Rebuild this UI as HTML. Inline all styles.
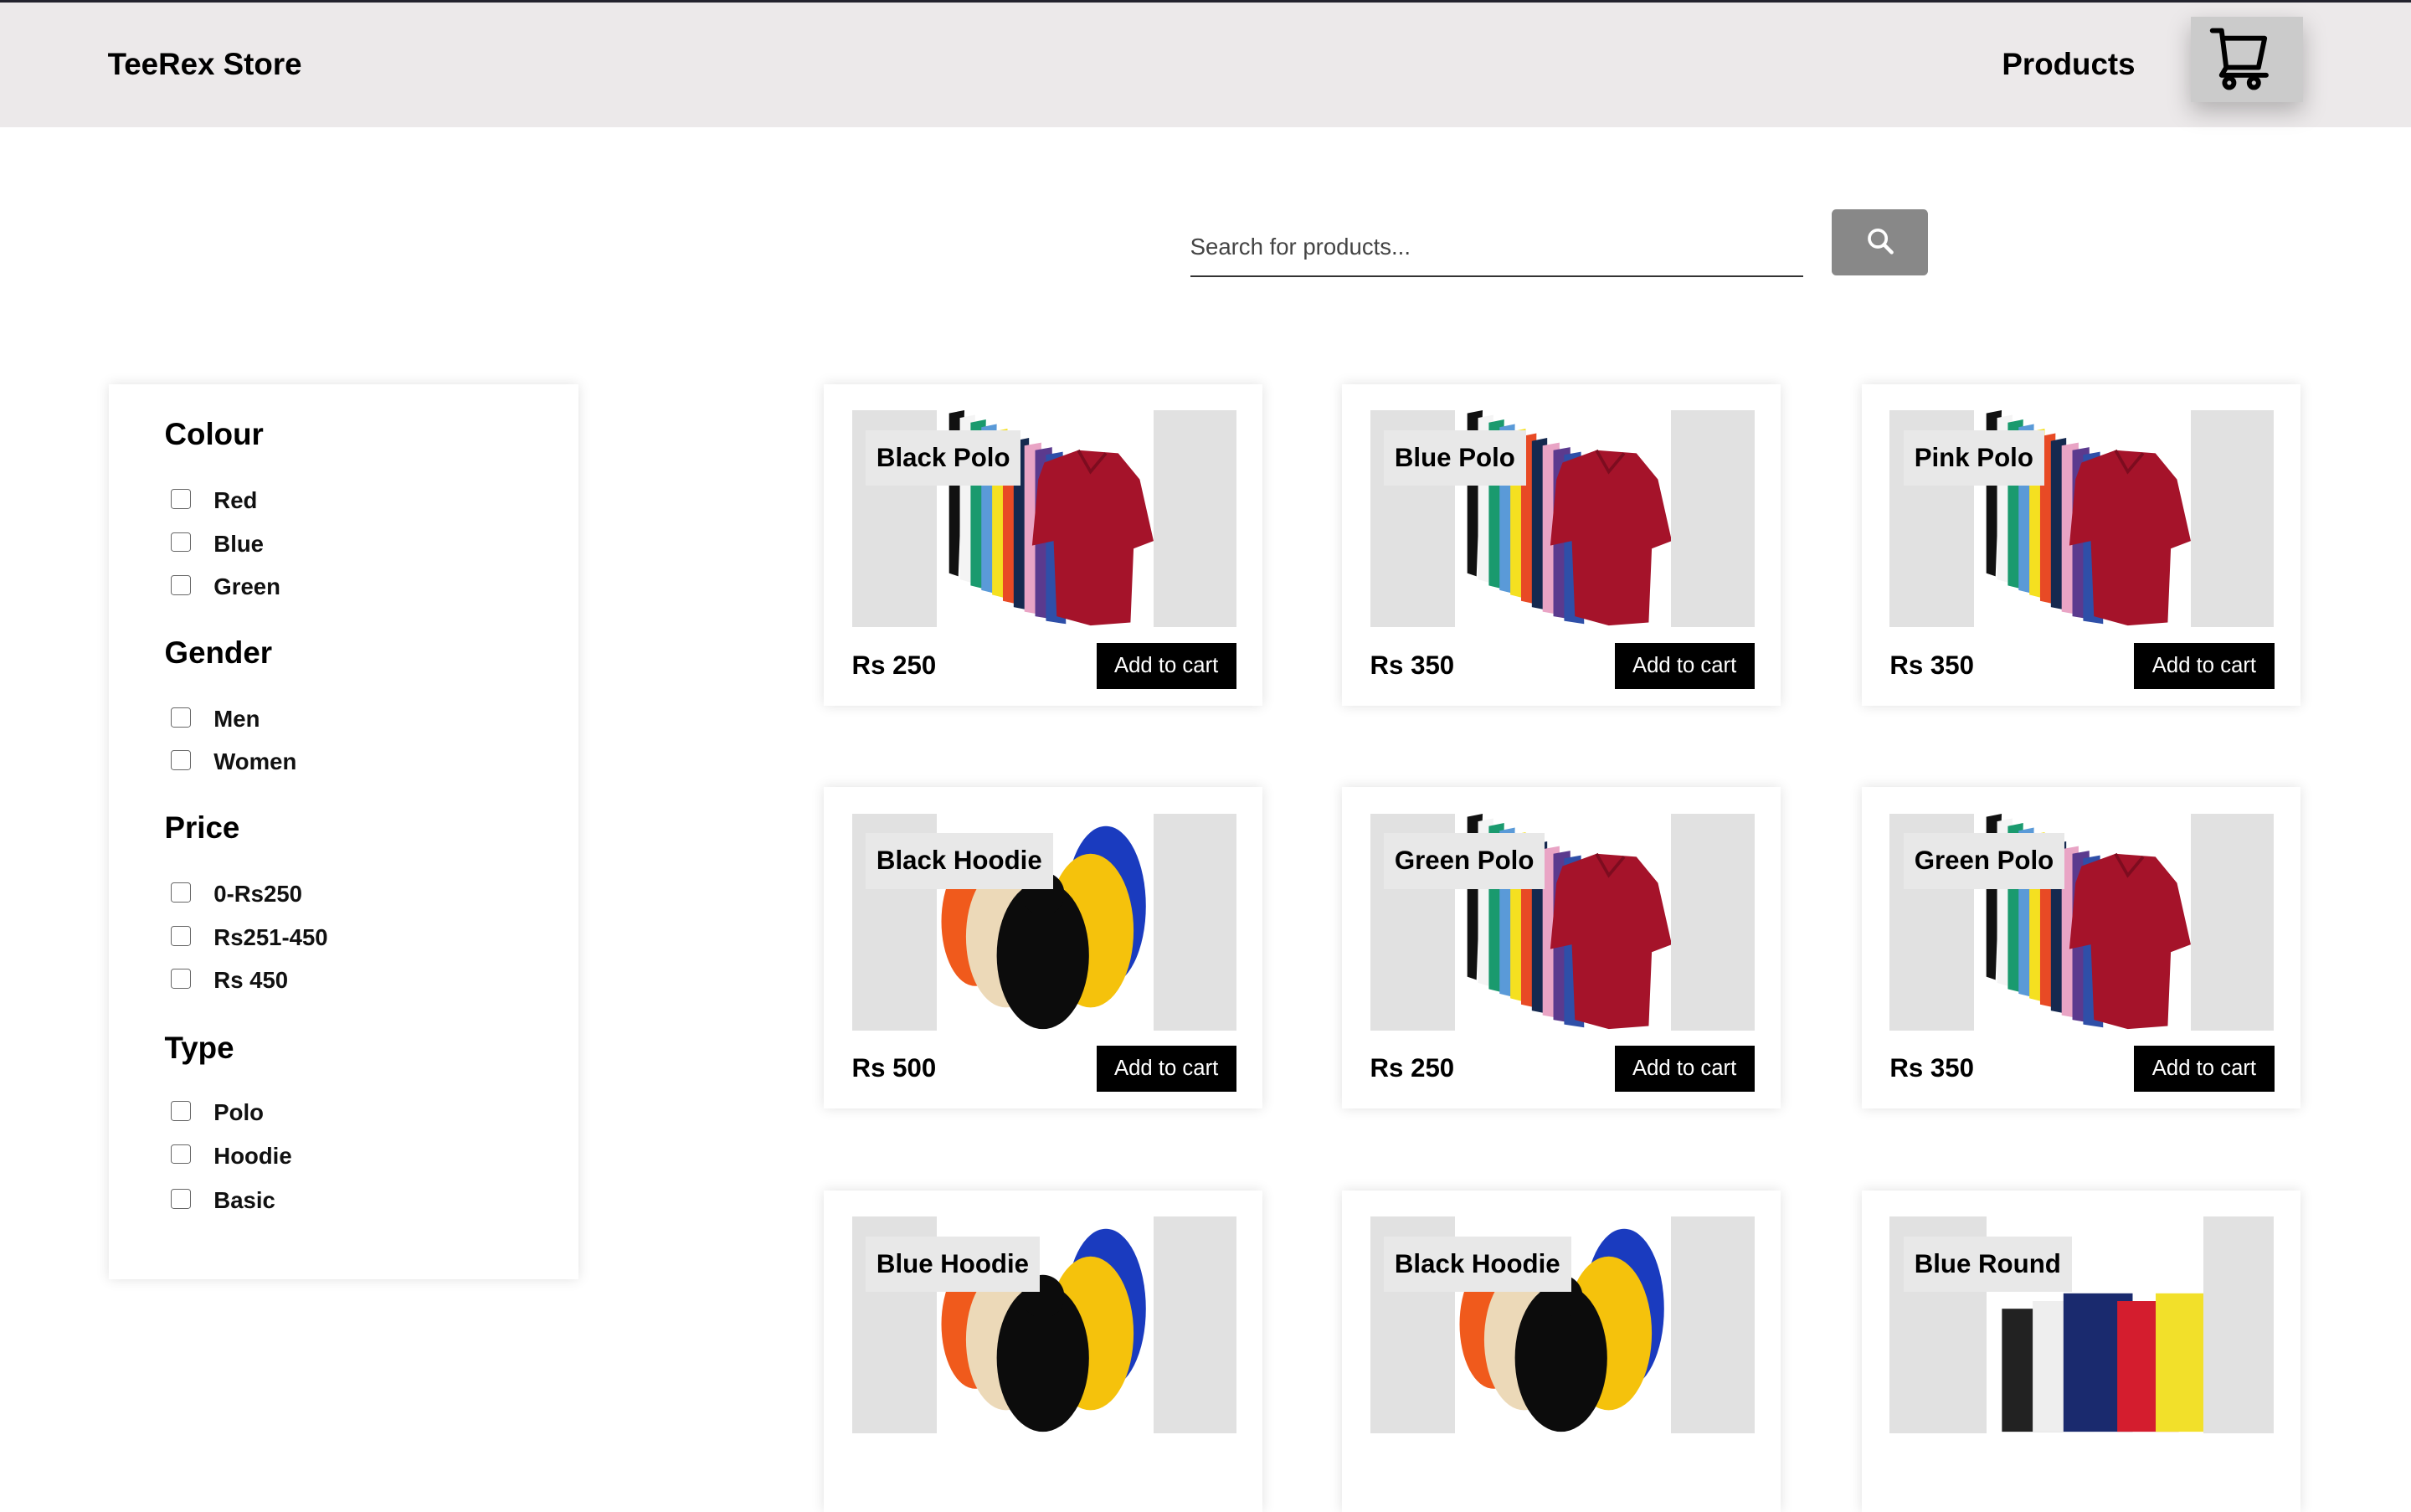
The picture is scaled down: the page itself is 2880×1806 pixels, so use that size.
<!DOCTYPE html>
<html><head><meta charset="utf-8">
<style>
html{zoom:1.83673}
*{box-sizing:border-box;margin:0;padding:0}
body{width:1568px;height:865px;overflow:hidden;background:#fff;font-family:"Liberation Sans",Arial,sans-serif;position:relative;color:#000}
.hdr{position:absolute;left:0;top:0;width:1568px;height:83px;background:#ece9ea;border-top:2px solid #23232e}
.logo{position:absolute;left:70px;top:29px;font-size:20px;font-weight:bold}
.prod{position:absolute;left:1302px;top:29px;font-size:20px;font-weight:bold}
.cartb{position:absolute;left:1425px;top:9px;width:73px;height:56px;background:#cbcbcb;box-shadow:0 6px 14px rgba(0,0,0,.25)}
.search{position:absolute;left:774px;top:152px;width:399px;height:28px;border-bottom:1.5px solid #333;font-size:15px;color:#444}
.sbtn{position:absolute;left:1191px;top:136px;width:63px;height:43px;background:#888;border-radius:3px}
.side{position:absolute;left:71px;top:250px;width:305px;height:582px;background:#fff;box-shadow:0 0 8px rgba(0,0,0,.12)}
.side h3{position:absolute;left:36px;font-size:20px;font-weight:bold}
.side .o{position:absolute;left:40px;font-size:15px;font-weight:bold;color:#111}
.side .o i{position:absolute;left:0;top:-1px;width:13px;height:13px;border:1px solid #666;border-radius:2px}
.side .o span{position:absolute;left:28px;top:-2px;white-space:nowrap}
.card{position:absolute;width:285px;height:209px;background:#fff;box-shadow:0 0 8px rgba(0,0,0,.12)}
.im{position:absolute;left:18px;top:17px;width:250px;height:141px;background:#e1e1e1}
.im svg{position:absolute;left:55px;top:0;width:141px;height:141px;background:#fff}
.lb{position:absolute;left:27px;top:30px;height:36px;padding:0 7px;line-height:36px;background:#e8e8e8;font-size:17px;font-weight:bold;white-space:nowrap}
.pr{position:absolute;left:18px;top:173px;font-size:17px;font-weight:bold}
.add{position:absolute;left:177px;top:168px;width:91px;height:30px;background:#000;color:#fff;font-size:14px;line-height:30px;text-align:center}
</style></head><body>
<svg width="0" height="0" style="position:absolute">
<defs>
<g id="polo">
<polygon points="8,2 18,0 14,108 8,106" fill="#111"/>
<polygon points="15,5 25,3 22,112 15,110" fill="#f4f4f4"/>
<polygon points="22,8 32,6 30,116 22,114" fill="#1a9a6e"/>
<polygon points="29,11 39,9 37,119 29,117" fill="#5a9ad8"/>
<polygon points="36,14 46,12 44,122 36,120" fill="#f5e020"/>
<polygon points="43,17 53,15 52,126 43,124" fill="#e84a25"/>
<polygon points="50,20 60,18 60,130 50,128" fill="#15294f"/>
<polygon points="57,23 68,21 68,133 57,131" fill="#e9a4c5"/>
<polygon points="64,26 75,24 76,136 64,134" fill="#5b3a8e"/>
<polygon points="71,29 82,27 84,139 71,137" fill="#2f4fa8"/>
<path d="M70,34 L92,26 L118,28 L132,45 L141,85 L128,90 L126,138 L100,140 L78,134 L76,85 L62,88 L66,45 Z" fill="#a5132a"/>
<path d="M92,26 L100,40 L110,28" fill="none" stroke="#7d0c1f" stroke-width="2"/>
</g>
<g id="hood">
<ellipse cx="25" cy="70" rx="22" ry="42" fill="#f05a1c"/>
<ellipse cx="110" cy="60" rx="26" ry="52" fill="#1a3bbf"/>
<ellipse cx="45" cy="80" rx="26" ry="46" fill="#ecd9b8"/>
<ellipse cx="100" cy="76" rx="28" ry="50" fill="#f5c20c"/>
<ellipse cx="69" cy="92" rx="30" ry="48" fill="#0c0c0c"/>
<ellipse cx="69" cy="52" rx="14" ry="14" fill="#0c0c0c"/>
</g>
<g id="tees">
<rect x="10" y="60" width="40" height="80" fill="#222"/>
<rect x="30" y="55" width="40" height="85" fill="#eee"/>
<rect x="50" y="50" width="45" height="90" fill="#1a2a6e"/>
<rect x="85" y="55" width="40" height="85" fill="#d41d2e"/>
<rect x="110" y="50" width="31" height="90" fill="#f2e02a"/>
</g>
</defs></svg>

<div class="hdr"><div class="logo">TeeRex Store</div><div class="prod">Products</div>
<div class="cartb"><svg width="73" height="56" viewBox="0 0 73 56"><g fill="none" stroke="#000" stroke-width="3.2" stroke-linecap="round" stroke-linejoin="round"><path d="M14 9 H20 L23 33 H44 L48 14 H21"/><path d="M23 33 L20 38 H49"/><circle cx="25" cy="43" r="3"/><circle cx="41" cy="43" r="3"/></g></svg></div></div>

<div class="search">Search for products...</div>
<div class="sbtn"><svg width="63" height="43" viewBox="0 0 63 43"><circle cx="30" cy="19" r="5.5" fill="none" stroke="#fff" stroke-width="2"/><path d="M34 23 L39 28" stroke="#fff" stroke-width="2.4" stroke-linecap="round"/></svg></div>

<div class="side">
<h3 style="top:21px">Colour</h3>
<div class="o" style="top:69px"><i></i><span>Red</span></div>
<div class="o" style="top:97px"><i></i><span>Blue</span></div>
<div class="o" style="top:125px"><i></i><span>Green</span></div>
<h3 style="top:163px">Gender</h3>
<div class="o" style="top:211px"><i></i><span>Men</span></div>
<div class="o" style="top:239px"><i></i><span>Women</span></div>
<h3 style="top:277px">Price</h3>
<div class="o" style="top:325px"><i></i><span>0-Rs250</span></div>
<div class="o" style="top:353px"><i></i><span>Rs251-450</span></div>
<div class="o" style="top:381px"><i></i><span>Rs 450</span></div>
<h3 style="top:420px">Type</h3>
<div class="o" style="top:467px"><i></i><span>Polo</span></div>
<div class="o" style="top:495px"><i></i><span>Hoodie</span></div>
<div class="o" style="top:524px"><i></i><span>Basic</span></div>
</div>

<div class="card" style="left:536px;top:250px"><div class="im"><svg viewBox="0 0 141 141"><use href="#polo"/></svg></div><div class="lb">Black Polo</div><div class="pr">Rs 250</div><div class="add">Add to cart</div></div>
<div class="card" style="left:873px;top:250px"><div class="im"><svg viewBox="0 0 141 141"><use href="#polo"/></svg></div><div class="lb">Blue Polo</div><div class="pr">Rs 350</div><div class="add">Add to cart</div></div>
<div class="card" style="left:1211px;top:250px"><div class="im"><svg viewBox="0 0 141 141"><use href="#polo"/></svg></div><div class="lb">Pink Polo</div><div class="pr">Rs 350</div><div class="add">Add to cart</div></div>

<div class="card" style="left:536px;top:512px"><div class="im"><svg viewBox="0 0 141 141"><use href="#hood"/></svg></div><div class="lb">Black Hoodie</div><div class="pr">Rs 500</div><div class="add">Add to cart</div></div>
<div class="card" style="left:873px;top:512px"><div class="im"><svg viewBox="0 0 141 141"><use href="#polo"/></svg></div><div class="lb">Green Polo</div><div class="pr">Rs 250</div><div class="add">Add to cart</div></div>
<div class="card" style="left:1211px;top:512px"><div class="im"><svg viewBox="0 0 141 141"><use href="#polo"/></svg></div><div class="lb">Green Polo</div><div class="pr">Rs 350</div><div class="add">Add to cart</div></div>

<div class="card" style="left:536px;top:774px"><div class="im"><svg viewBox="0 0 141 141"><use href="#hood"/></svg></div><div class="lb">Blue Hoodie</div></div>
<div class="card" style="left:873px;top:774px"><div class="im"><svg viewBox="0 0 141 141"><use href="#hood"/></svg></div><div class="lb">Black Hoodie</div></div>
<div class="card" style="left:1211px;top:774px"><div class="im"><svg viewBox="0 0 141 141" style="left:63px;width:141px"><use href="#tees"/></svg></div><div class="lb">Blue Round</div></div>
</body></html>
